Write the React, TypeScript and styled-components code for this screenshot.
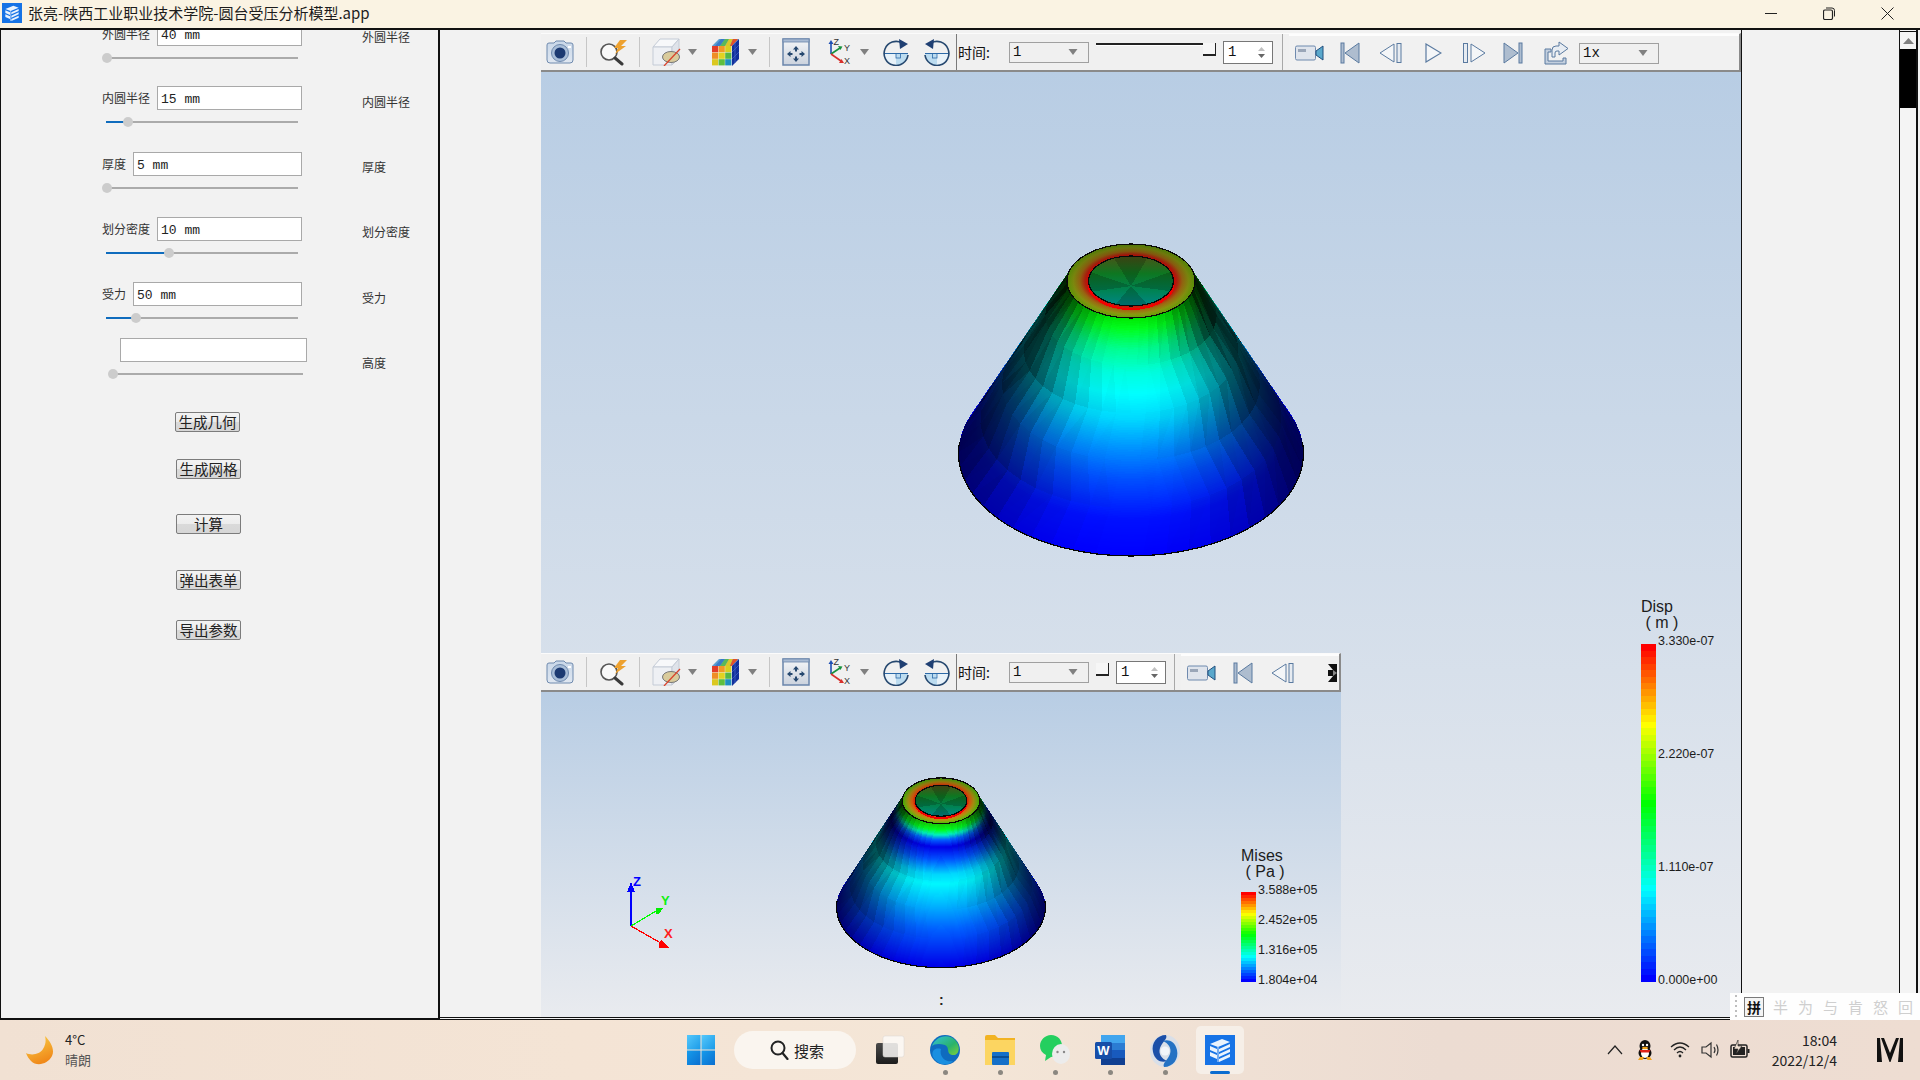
import React from 'react';
import styled, { createGlobalStyle } from 'styled-components';

const CJK = `"Noto Sans CJK SC", "Liberation Sans", sans-serif`;
const MONO = `"Liberation Mono", "Noto Sans CJK SC", monospace`;

const Global = createGlobalStyle`
  html, body { margin: 0; padding: 0; background: #f2f2f2; overflow: hidden; }
  * { box-sizing: border-box; }
`;

const Root = styled.div`
  position: relative;
  width: 1920px;
  height: 1080px;
  display: flex;
  flex-direction: column;
  font-family: ${CJK};
  color: #222;
  overflow: hidden;
`;

/* ---------- title bar ---------- */
const TitleBar = styled.header`
  height: 30px;
  flex: none;
  background: #faf3e3;
  border-bottom: 2px solid #111;
  display: flex;
  align-items: center;
  padding: 0 0 2px 2px;
`;
const TitleText = styled.span`
  margin-left: 6px;
  font-size: 15px;
  line-height: 20px;
  color: #1c1c1c;
  white-space: nowrap;
`;
const WinButtons = styled.div`
  margin-left: auto;
  display: flex;
  align-items: center;
  padding-right: 26px;
  gap: 46px;
`;

const AppLogo = ({ size }: { size: number }) => (
  <svg width={size} height={size} viewBox="0 0 30 30">
    <rect width="30" height="30" fill="#1673e6" />
    <path d="M5 9 L17 4 L25 7 L13 12 Z M5 11 L12 14 V18 L5 15 Z M14 14 L25 9 V12 L14 17 Z M5 17 L12 20 V24 L5 21 Z M14 19 L25 14 V17 L14 22 Z M14 24 L25 19 V22 L14 27 Z" fill="#eaf3fd" />
    <path d="M13 12 V27" stroke="#cfe3fa" strokeWidth="1" />
  </svg>
);

/* ---------- main area ---------- */
const Main = styled.main`
  flex: 1;
  min-height: 0;
  display: flex;
  background: #f2f2f2;
`;

const Panel = styled.section`
  width: 440px;
  flex: none;
  border-left: 1px solid #111;
  border-right: 2px solid #111;
  border-bottom: 2px solid #111;
  overflow: hidden;
  background: #f2f2f2;
`;
const Row = styled.div<{ $mt: number }>`
  display: flex;
  margin-top: ${p => p.$mt}px;
  padding-left: 101px;
`;
const Controls = styled.div<{ $shift?: number; $w?: number }>`
  width: ${p => p.$w ?? 200}px;
  flex: none;
  margin-left: ${p => p.$shift ?? 0}px;
`;
const FieldLine = styled.div`
  display: flex;
  align-items: center;
  gap: 7px;
  height: 24px;
`;
const FieldLabel = styled.label`
  font-size: 12px;
  line-height: 24px;
  color: #333;
  white-space: nowrap;
`;
const FieldInput = styled.input`
  flex: 1;
  min-width: 0;
  height: 24px;
  background: #fff;
  border: 1px solid #a9a9a9;
  outline: none;
  padding: 2px 3px 0;
  font-family: ${MONO};
  font-size: 13px;
  color: #222;
`;
const SideLabel = styled.span<{ $ml: number; $mt: number }>`
  margin-left: ${p => p.$ml}px;
  margin-top: ${p => p.$mt}px;
  font-size: 12px;
  line-height: 24px;
  color: #333;
  white-space: nowrap;
`;
const SliderWrap = styled.div<{ $ml: number; $w: number }>`
  position: relative;
  height: 24px;
  margin-left: ${p => p.$ml}px;
  width: ${p => p.$w}px;
  display: flex;
  align-items: center;
`;
const Track = styled.div`
  flex: 1;
  height: 2px;
  background: #ababab;
`;
const Fill = styled.div<{ $pct: number }>`
  position: absolute;
  left: 0;
  height: 2px;
  width: ${p => p.$pct}%;
  background: #0f6cbd;
`;
const Thumb = styled.div<{ $pct: number }>`
  position: absolute;
  left: calc(${p => p.$pct}% - 5px);
  width: 10px;
  height: 10px;
  border-radius: 50%;
  background: #cccccc;
`;
const ButtonStack = styled.div`
  display: flex;
  flex-direction: column;
  align-items: flex-start;
  padding-left: 174px;
`;
const ActionButton = styled.button<{ $mt: number; $ml?: number }>`
  width: 65px;
  height: 20px;
  margin-top: ${p => p.$mt}px;
  margin-left: ${p => p.$ml ?? 1}px;
  padding: 0;
  border: 1px solid #7c7c7c;
  border-radius: 2px;
  background: linear-gradient(180deg, #f3f3f3 0%, #ececec 50%, #dadada 50%, #d6d6d6 100%);
  font-family: ${CJK};
  font-size: 14.5px;
  line-height: 18px;
  color: #222;
`;

const Middle = styled.section`
  width: 1302px;
  flex: none;
  padding: 3px 0 0 101px;
  border-bottom: 3px double #111;
  border-right: 1px solid #111;
`;
const Scene = styled.div`
  position: relative;
  width: 1200px;
  height: 984px;
  display: flex;
  flex-direction: column;
`;
const InsetView = styled.div`
  position: absolute;
  left: 0;
  top: 620px;
  bottom: 0;
  width: 800px;
  display: flex;
  flex-direction: column;
`;
const Sky = styled.div`
  position: relative;
  flex: 1;
  min-height: 0;
  background: linear-gradient(180deg, #b8cde4 0%, #e9ebef 100%);
`;
const ConeHolder = styled.div<{ $l: number; $t: number }>`
  position: absolute;
  left: ${p => p.$l}px;
  top: ${p => p.$t}px;
  line-height: 0;
`;
const Colon = styled.span`
  position: absolute;
  left: 398px;
  top: 301px;
  font-family: "Liberation Sans", sans-serif;
  font-size: 14px;
  line-height: 14px;
  font-weight: 700;
  color: #222;
`;

const RightGap = styled.div`
  width: 158px;
  flex: none;
  border-right: 1px solid #111;
`;
const ScrollBar = styled.div`
  width: 18px;
  flex: none;
  display: flex;
  flex-direction: column;
  border-right: 2px solid #111;
  background: #f4f4f4;
`;
const ScrollUp = styled.div`
  height: 18px;
  flex: none;
  margin-top: 1px;
  border-top: 1px solid #111;
  background: #f4f4f4;
  display: flex;
  align-items: center;
  justify-content: center;
`;
const ScrollThumb = styled.div`
  height: 59px;
  flex: none;
  background: #000;
`;

/* ---------- viewer toolbar ---------- */
const Bar = styled.div`
  height: 39px;
  flex: none;
  display: flex;
  align-items: center;
  padding-left: 5px;
  background: #f0f0f0;
  border-top: 1px solid #fbfbfb;
  border-right: 2px solid #8a8a8a;
  border-bottom: 2px solid #8a8a8a;
`;
const Tool = styled.span<{ $ml: number }>`
  display: inline-flex;
  flex: none;
  margin-left: ${p => p.$ml}px;
  line-height: 0;
`;
const Sep = styled.span<{ $ml: number }>`
  flex: none;
  width: 1px;
  height: 30px;
  margin-left: ${p => p.$ml}px;
  background: #c6c6c6;
`;
const HardSep = styled.span<{ $ml: number; $dark?: boolean }>`
  flex: none;
  width: 1px;
  height: 100%;
  margin-left: ${p => p.$ml}px;
  background: ${p => (p.$dark ? '#7a7a7a' : '#a8a8a8')};
`;
const TimeLabel = styled.span`
  flex: none;
  width: 36px;
  margin-left: 1px;
  font-size: 14px;
  line-height: 20px;
  color: #111;
  white-space: nowrap;
`;
const Combo = styled.span<{ $ml: number }>`
  flex: none;
  width: 80px;
  height: 21px;
  margin-left: ${p => p.$ml}px;
  border: 1px solid #a0a0a0;
  background: #f0f0f0;
  display: flex;
  align-items: center;
  justify-content: space-between;
  padding: 0 10px 0 3px;
  font-family: ${MONO};
  font-size: 14px;
  color: #111;
`;
const TimeSlider = styled.span<{ $w: number }>`
  flex: none;
  width: ${p => p.$w}px;
  height: 13px;
  margin: -5px 0 0 7px;
  display: flex;
  align-items: flex-start;
`;
const SliderLine = styled.span`
  flex: 1;
  height: 3px;
  background: #222;
  border-bottom: 1px solid #fff;
`;
const SliderGrip = styled.span`
  flex: none;
  width: 13px;
  height: 13px;
  background: #f6f6f6;
  border-right: 1px solid #222;
  border-bottom: 2px solid #222;
`;
const Spin = styled.span`
  flex: none;
  width: 50px;
  height: 23px;
  margin-left: 7px;
  background: #fff;
  border: 1px solid #777;
  display: flex;
  align-items: center;
  justify-content: space-between;
  padding: 0 7px 0 4px;
  font-family: ${MONO};
  font-size: 14px;
  color: #111;
`;
const SpinArrows = styled.span`
  display: flex;
  flex-direction: column;
  gap: 3px;
  line-height: 0;
`;
const Raised = styled.span`
  display: flex;
  flex: 1;
  min-width: 0;
  height: 100%;
  align-items: center;
  margin-left: 6px;
  padding-left: 6px;
  background: #f1f1f1;
  border-top: 2px solid #fdfdfd;
`;

const Caret = ({ color = '#808080', w = 9 }: { color?: string; w?: number }) => (
  <svg width={w} height={6} viewBox="0 0 9 6"><path d="M0 0 H9 L4.5 6 Z" fill={color} /></svg>
);
const Camera = () => (
  <svg width="28" height="24" viewBox="0 0 28 24">
    <linearGradient id="camB" x1="0" y1="0" x2="0" y2="1"><stop offset="0" stopColor="#c9d7e8" /><stop offset="1" stopColor="#dfe7f1" /></linearGradient>
    <path d="M8 3 L10 1 H18 L20 3 H25 Q27 3 27 5 V20 Q27 23 24 23 H4 Q1 23 1 20 V5 Q1 3 3 3 Z" fill="url(#camB)" stroke="#6f8aae" />
    <circle cx="14" cy="13" r="8.5" fill="#a9bed8" stroke="#6f8aae" />
    <circle cx="14" cy="13" r="5.5" fill="#1c3a72" />
    <rect x="22" y="6" width="3" height="2" fill="#fff" />
  </svg>
);
const QuickFind = () => (
  <svg width="29" height="27" viewBox="0 0 29 27">
    <circle cx="10" cy="13" r="8" fill="#f9f9f9" stroke="#555" strokeWidth="1.6" />
    <path d="M16 19 L23 25" stroke="#3a3a3a" strokeWidth="3" strokeLinecap="round" />
    <path d="M21 1 L15 9 L19 9 L16 15 L27 7 L22 7 L28 1 Z" fill="#eda12f" />
  </svg>
);
const SectionBox = () => (
  <svg width="29" height="28" viewBox="0 0 29 28">
    <path d="M1 9 L8 1 H27 L20 9 Z" fill="#f7f8fa" stroke="#c4cbd6" />
    <path d="M1 9 H20 V27 H1 Z" fill="#eef0f4" stroke="#c4cbd6" />
    <path d="M20 9 L27 1 V20 L20 27 Z" fill="#dfe3ea" stroke="#c4cbd6" />
    <ellipse cx="19" cy="19" rx="8.5" ry="5.5" fill="#d9cb9c" stroke="#777" />
    <path d="M12 28 L28 11" stroke="#d9442c" strokeWidth="1.3" />
  </svg>
);
const RainbowCube = () => {
  const front = ['#e23c28', '#f29a26', '#d9cf1f', '#ef8e24', '#e2d320', '#56b845', '#dbc81f', '#5fbf3e', '#1f8fc0'];
  return (
    <svg width="27" height="27" viewBox="0 0 27 27">
      <path d="M0 7 L7 0 H27 L20 7 Z" fill="#5a9ed0" />
      <path d="M3 7 L9 0 H13 L8 7 Z" fill="#3a7cc8" /><path d="M8 7 L13 0 H17 L13 7 Z" fill="#59b85a" /><path d="M13 7 L17 0 H21 L18 7 Z" fill="#d8c82a" /><path d="M18 7 L21 0 H26 L20 7 Z" fill="#e2502c" />
      {front.map((c, i) => <rect key={i} x={(i % 3) * 6.6} y={7 + Math.floor(i / 3) * 6.6} width="6.2" height="6.2" fill={c} />)}
      <path d="M20 7 L27 0 V20 L20 27 Z" fill="#12309c" />
      <path d="M23 4 V24 M20 13 L27 6 M20 20 L27 13" stroke="#3f62c4" strokeWidth=".8" />
    </svg>
  );
};
const FitView = () => (
  <svg width="28" height="28" viewBox="0 0 28 28">
    <linearGradient id="fitB" x1="0" y1="0" x2="0" y2="1"><stop offset="0" stopColor="#f4f6f8" /><stop offset="1" stopColor="#cbd2dd" /></linearGradient>
    <rect x="1" y="1" width="26" height="26" fill="url(#fitB)" stroke="#6a85ab" strokeWidth="1.5" />
    <rect x="1" y="1" width="26" height="3" fill="#a9bbd4" stroke="#6a85ab" strokeWidth=".8" />
    <g fill="#26486f">
      <path d="M14 8 L11 11.5 H13 V13.5 H15 V11.5 H17 Z" />
      <path d="M14 24 L11 20.5 H13 V18.5 H15 V20.5 H17 Z" />
      <path d="M5 16 L8.5 13 V15 H10.5 V17 H8.5 V19 Z" />
      <path d="M23 16 L19.5 13 V15 H17.5 V17 H19.5 V19 Z" />
    </g>
  </svg>
);
const AxesIcon = () => (
  <svg width="24" height="28" viewBox="0 0 24 28">
    <path d="M4 16 V5" stroke="#1f4fb4" strokeWidth="1.6" /><path d="M1.5 6 L4 2 L6.5 6 Z" fill="#1f4fb4" />
    <path d="M4 16 L13 10" stroke="#16913c" strokeWidth="1.6" /><path d="M11 8 L15.5 8.5 L13.5 12 Z" fill="#16913c" />
    <path d="M4 16 L14 23" stroke="#d8302c" strokeWidth="1.6" /><path d="M12 25 L17 25 L14.5 21 Z" fill="#d8302c" />
    <text x="6.5" y="7" fontSize="9" fontFamily="Liberation Sans" fill="#333">Z</text>
    <text x="17" y="13" fontSize="9" fontFamily="Liberation Sans" fill="#333">Y</text>
    <text x="17" y="26" fontSize="9" fontFamily="Liberation Sans" fill="#333">X</text>
  </svg>
);
const RotateCW = ({ flip }: { flip?: boolean }) => (
  <svg width="26" height="27" viewBox="0 0 26 27">
    <g transform={flip ? 'translate(26 0) scale(-1 1)' : undefined}>
      <path d="M1 14.5 A12 12 0 0 0 25 14.5 Z" fill="#e8f2f9" />
      <path d="M13 14.5 H25 A12 12 0 0 1 13 26.5 Z" fill="#bcdcf0" />
      <rect x="13" y="14.5" width="4.5" height="4.5" fill="none" stroke="#2d6aa8" strokeWidth=".8" />
      <path d="M1 14.5 H25" stroke="#2d6aa8" strokeWidth="1" />
      <path d="M25 16 A12 12 0 1 1 19 4" fill="none" stroke="#26486f" strokeWidth="1.6" />
      <path d="M16 0 L25 5 L17 10 Z" fill="#1f3f72" />
    </g>
  </svg>
);
const VideoCam = () => (
  <svg width="29" height="18" viewBox="0 0 29 18">
    <rect x=".5" y="2" width="20" height="14" rx="1.5" fill="#dfe4ec" stroke="#6f8aae" />
    <rect x="3" y="5" width="8" height="3" fill="#9aa6b8" />
    <path d="M21 7 L28 2 V16 L21 11 Z" fill="#5aa8cc" stroke="#23507f" />
  </svg>
);
const StepFirst = () => (
  <svg width="20" height="22" viewBox="0 0 20 22">
    <rect x="1" y="1" width="3" height="20" fill="#aebdd0" stroke="#5a7aa0" />
    <path d="M19 1 V21 L5 11 Z" fill="#aebdcf" stroke="#5a7aa0" />
  </svg>
);
const StepPrev = () => (
  <svg width="24" height="22" viewBox="0 0 24 22">
    <path d="M15 2 V20 L1 11 Z" fill="#f4f6f8" stroke="#5a7aa0" />
    <rect x="18" y="1.5" width="4" height="19" fill="#e6ebf1" stroke="#5a7aa0" />
  </svg>
);
const Play = () => (
  <svg width="17" height="20" viewBox="0 0 17 20"><path d="M1 1 L16 10 L1 19 Z" fill="#f4f6f8" stroke="#5a7aa0" strokeWidth="1.2" /></svg>
);
const StepNext = () => (
  <svg width="24" height="22" viewBox="0 0 24 22">
    <rect x="1.5" y="1.5" width="4" height="19" fill="#e6ebf1" stroke="#5a7aa0" />
    <path d="M9 2 V20 L23 11 Z" fill="#f4f6f8" stroke="#5a7aa0" />
  </svg>
);
const StepLast = () => (
  <svg width="20" height="22" viewBox="0 0 20 22">
    <path d="M1 1 V21 L15 11 Z" fill="#aebdcf" stroke="#5a7aa0" />
    <rect x="16" y="1" width="3" height="20" fill="#aebdd0" stroke="#5a7aa0" />
  </svg>
);
const ExportIcon = () => (
  <svg width="25" height="24" viewBox="0 0 25 24">
    <path d="M1 8 H7 V11 H4 V20 H19 V17 H22 V23 H1 Z" fill="#c3cfde" stroke="#5a7aa0" />
    <path d="M8 16 V9 Q8 5 12 5 H15 V1 L24 7.5 L15 14 V10 H13 Q11 10 11 12 V16 Z" fill="#e8edf3" stroke="#5a7aa0" />
  </svg>
);
const Clipped = () => (
  <svg width="11" height="18" viewBox="0 0 11 18">
    <path d="M2 0 H11 V18 H2 L7 12 H2 V6 H7 Z" fill="#111" />
    <path d="M7 6 L11 9 L7 12 Z" fill="#888" />
  </svg>
);

const CommonTools = () => (
  <>
    <Tool $ml={0}><Camera /></Tool>
    <Sep $ml={12} />
    <Tool $ml={12}><QuickFind /></Tool>
    <Sep $ml={11} />
    <Tool $ml={12}><SectionBox /></Tool>
    <Tool $ml={7}><Caret /></Tool>
    <Tool $ml={15}><RainbowCube /></Tool>
    <Tool $ml={9}><Caret /></Tool>
    <Sep $ml={12} />
    <Tool $ml={12}><FitView /></Tool>
    <Tool $ml={17}><AxesIcon /></Tool>
    <Tool $ml={9}><Caret /></Tool>
    <Tool $ml={14}><RotateCW /></Tool>
    <Tool $ml={15}><RotateCW flip /></Tool>
    <HardSep $ml={6} $dark />
    <TimeLabel>时间:</TimeLabel>
    <Combo $ml={15}>1<Caret w={10} /></Combo>
  </>
);
const SpinBox = () => (
  <Spin>1<SpinArrows><svg width="7" height="4"><path d="M0 4 L3.5 0 L7 4 Z" fill="#c0c0c0" /></svg><svg width="7" height="4"><path d="M0 0 H7 L3.5 4 Z" fill="#666" /></svg></SpinArrows></Spin>
);

const MainToolbar = () => (
  <Bar>
    <CommonTools />
    <TimeSlider $w={120}><SliderLine /><SliderGrip /></TimeSlider>
    <SpinBox />
    <HardSep $ml={9} />
    <Raised>
      <Tool $ml={0}><VideoCam /></Tool>
      <Tool $ml={16}><StepFirst /></Tool>
      <Tool $ml={19}><StepPrev /></Tool>
      <Tool $ml={22}><Play /></Tool>
      <Tool $ml={20}><StepNext /></Tool>
      <Tool $ml={17}><StepLast /></Tool>
      <Tool $ml={21}><ExportIcon /></Tool>
      <Combo $ml={10}>1x<Caret w={10} /></Combo>
    </Raised>
  </Bar>
);
const InsetToolbar = () => (
  <Bar>
    <CommonTools />
    <TimeSlider $w={13}><SliderLine /><SliderGrip /></TimeSlider>
    <SpinBox />
    <HardSep $ml={8} />
    <Raised>
      <Tool $ml={0}><VideoCam /></Tool>
      <Tool $ml={17}><StepFirst /></Tool>
      <Tool $ml={18}><StepPrev /></Tool>
      <Tool $ml={31}><Clipped /></Tool>
    </Raised>
  </Bar>
);

/* ---------- cone drawing ---------- */
type ConeOpts = {
  id: string;
  width: number;
  height: number;
  baseRy: number;
  body: [number, string][];
  ring: [number, string][];
  dark: number;
};
const CX = 180, RING_Y = 40, BASE_Y = 212, RING_RX = 64, RING_RY = 37, BASE_RX = 172.5;
const noise = (n: number) => {
  const v = Math.sin(n * 127.1 + 11.7) * 43758.5453;
  return v - Math.floor(v);
};
const hexRgb = (h: string) => [1, 3, 5].map(i => parseInt(h.slice(i, i + 2), 16));
const sampleStops = (stops: [number, string][], y: number) => {
  let k = 0;
  while (k < stops.length - 2 && y > stops[k + 1][0]) k++;
  const f = Math.max(0, Math.min(1, (y - stops[k][0]) / (stops[k + 1][0] - stops[k][0])));
  const a = hexRgb(stops[k][1]), b = hexRgb(stops[k + 1][1]);
  return `rgb(${a.map((v, j) => Math.round(v + (b[j] - v) * f)).join(',')})`;
};

const Cone = ({ id, width, height, baseRy, body, ring, dark }: ConeOpts) => {
  const rad = (d: number) => (d * Math.PI) / 180;
  const ringPt = (a: number) => [CX + RING_RX * Math.cos(a), RING_Y + RING_RY * Math.sin(a)];
  const basePt = (a: number) => [CX + BASE_RX * Math.cos(a), BASE_Y + baseRy * Math.sin(a)];
  const at = (t: number, a: number) => {
    const r = ringPt(a), b = basePt(a);
    return [r[0] + (b[0] - r[0]) * t, r[1] + (b[1] - r[1]) * t];
  };
  const frontTop = RING_Y + RING_RY, frontBottom = BASE_Y + baseRy;
  const slices = [];
  const N = 140;
  for (let i = N; i >= 0; i--) {
    const t = i / N;
    slices.push({
      cy: RING_Y + (BASE_Y - RING_Y) * t,
      rx: RING_RX + (BASE_RX - RING_RX) * t,
      ry: RING_RY + (baseRy - RING_RY) * t,
      fill: sampleStops(body, frontTop + (frontBottom - frontTop) * t),
    });
  }
  const outline: string[] = [];
  for (let d = -17; d <= 197; d += 2) outline.push(basePt(rad(d)).map(n => n.toFixed(1)).join(','));
  for (let d = 197; d >= -17; d -= 2) outline.push(ringPt(rad(d)).map(n => n.toFixed(1)).join(','));

  const rows = 5, strips = 28;
  const tris: { pts: string; o: number }[] = [];
  const step = rad(220) / strips;
  for (let i = 0; i < rows; i++) {
    const t0 = i / rows, t1 = (i + 1) / rows;
    for (let s = -1; s <= strips; s++) {
      const a0 = rad(-20) + s * step + (i % 2 ? step / 2 : 0);
      const a1 = a0 + step;
      const a2 = rad(-20) + s * step + (i % 2 ? 0 : step / 2);
      const a3 = a2 + step;
      const mid = (a0 + a1) / 2;
      const c = Math.abs(Math.cos(mid));
      const jit = (noise(i * 53 + s) - 0.5) * 0.1 * (1 - t0 * 0.8);
      const base = Math.pow(c, 2.8) * dark * (1 - 0.3 * t0);
      const o1 = Math.max(0, Math.min(0.96, base + jit * c));
      const o2 = Math.max(0, Math.min(0.96, base - jit * 0.6 * c));
      const p = (q: number[]) => q.map(n => n.toFixed(1)).join(',');
      tris.push({ pts: `${p(at(t0, a0))} ${p(at(t0, a1))} ${p(at(t1, a3))}`, o: o1 });
      tris.push({ pts: `${p(at(t0, a0))} ${p(at(t1, a2))} ${p(at(t1, a3))}`, o: o2 });
    }
  }
  const holeRx = RING_RX * 0.664, holeRy = RING_RY * 0.676;
  const fan: { pts: string; o: number }[] = [];
  for (let k = 0; k < 8; k++) {
    const a = rad(k * 45 + 22), b = rad((k + 1) * 45 + 22);
    fan.push({
      pts: `${CX},${RING_Y + 5} ${CX + holeRx * 1.2 * Math.cos(a)},${RING_Y + holeRy * 1.2 * Math.sin(a)} ${CX + holeRx * 1.2 * Math.cos(b)},${RING_Y + holeRy * 1.2 * Math.sin(b)}`,
      o: k % 2 ? 0.2 : 0.02,
    });
  }
  const baseArcFront = `M${basePt(rad(-6)).join(' ')} A${BASE_RX} ${baseRy} 0 1 1 ${basePt(rad(186)).join(' ')}`;
  return (
    <svg width={width} height={height} viewBox="0 0 360 325" preserveAspectRatio="none" shapeRendering="crispEdges">
      <defs>
        <radialGradient id={`${id}-r`}>
          {ring.map(([o, c]) => <stop key={o} offset={o} stopColor={c} />)}
        </radialGradient>
        <linearGradient id={`${id}-shade`} x1="0" y1="0" x2="0" y2="1">
          <stop offset="0" stopColor="#000" stopOpacity=".25" /><stop offset="1" stopColor="#000" stopOpacity="0" />
        </linearGradient>
        <linearGradient id={`${id}-h`} x1="0" y1="0" x2="0" y2="1">
          <stop offset="0" stopColor="#4e5418" /><stop offset=".35" stopColor="#0f7a22" /><stop offset=".7" stopColor="#008656" /><stop offset="1" stopColor="#008a8c" />
        </linearGradient>
        <clipPath id={`${id}-c`}><polygon points={outline.join(' ')} /></clipPath>
        <clipPath id={`${id}-hc`}><ellipse cx={CX} cy={RING_Y} rx={holeRx} ry={holeRy} /></clipPath>
      </defs>
      {slices.map((s, i) => <ellipse key={i} cx={CX} cy={s.cy} rx={s.rx} ry={s.ry} fill={s.fill} />)}
      <g clipPath={`url(#${id}-c)`}>
        {tris.map((t, i) => <polygon key={i} points={t.pts} fill="#000" fillOpacity={t.o} />)}
      </g>
      <path d={baseArcFront} fill="none" stroke="#050505" strokeWidth="1.2" vectorEffect="non-scaling-stroke" />
      <ellipse cx={CX} cy={RING_Y} rx={RING_RX} ry={RING_RY} fill={`url(#${id}-r)`} stroke="#0a0a0a" strokeWidth="1.2" vectorEffect="non-scaling-stroke" />
      <ellipse cx={CX} cy={RING_Y} rx={RING_RX} ry={RING_RY} fill={`url(#${id}-shade)`} />
      <ellipse cx={CX} cy={RING_Y} rx={holeRx} ry={holeRy} fill={`url(#${id}-h)`} />
      <g clipPath={`url(#${id}-hc)`}>
        {fan.map((t, i) => <polygon key={i} points={t.pts} fill="#000" fillOpacity={t.o} />)}
      </g>
      <path d={`M${CX - holeRx} ${RING_Y + 3} A${holeRx} ${holeRy} 0 0 0 ${CX + holeRx} ${RING_Y + 3}`} fill="none" stroke="#f40000" strokeWidth="2" vectorEffect="non-scaling-stroke" />
      <ellipse cx={CX} cy={RING_Y} rx={holeRx} ry={holeRy} fill="none" stroke="#0a0a0a" strokeWidth="1.2" vectorEffect="non-scaling-stroke" />
    </svg>
  );
};

const BIG_BODY: [number, string][] = [
  [77, '#00e800'], [89, '#00ff20'], [109, '#00ff90'], [134, '#00ffe0'], [154, '#00ffff'],
  [179, '#00d8ff'], [209, '#0090ff'], [239, '#0050ff'], [279, '#0010ff'], [315, '#0000ff'],
];
const SMALL_BODY: [number, string][] = [
  [76, '#20c000'], [88, '#00ff20'], [96, '#00f0c0'], [104, '#0060ff'], [116, '#0000e8'],
  [136, '#0050ff'], [160, '#00d8ff'], [176, '#00f8ff'], [208, '#00b8ff'], [249, '#0060ff'], [310, '#0000e8'],
];
const BIG_RING: [number, string][] = [[0.66, '#f00000'], [0.72, '#c42410'], [0.8, '#a56e12'], [0.9, '#8b9a10'], [1, '#62a208']];
const SMALL_RING: [number, string][] = [[0.66, '#f02000'], [0.74, '#f06010'], [0.84, '#b89a10'], [0.93, '#78b410'], [1, '#40c000']];

/* ---------- legends ---------- */
const rainbow = (n: number) => {
  const key: [number, number[]][] = [
    [0, [255, 0, 0]], [0.235, [255, 255, 0]], [0.47, [0, 255, 0]], [0.73, [0, 255, 255]], [1, [0, 0, 255]],
  ];
  const parts: string[] = [];
  for (let i = 0; i < n; i++) {
    const t = i / (n - 1);
    let k = 0;
    while (k < key.length - 2 && t > key[k + 1][0]) k++;
    const f = (t - key[k][0]) / (key[k + 1][0] - key[k][0]);
    const c = key[k][1].map((v, j) => Math.round(v + (key[k + 1][1][j] - v) * f));
    parts.push(`rgb(${c.join(',')}) ${(i / n) * 100}% ${((i + 1) / n) * 100}%`);
  }
  return `linear-gradient(180deg, ${parts.join(', ')})`;
};
const LegendBox = styled.div<{ $l: number; $t: number }>`
  position: absolute;
  left: ${p => p.$l}px;
  top: ${p => p.$t}px;
  font-family: "Liberation Sans", sans-serif;
  color: #1c1c1c;
`;
const LegendTitle = styled.div`
  font-size: 16px;
  line-height: 16px;
  white-space: pre;
`;
const LegendBody = styled.div<{ $mt: number }>`
  display: flex;
  margin-top: ${p => p.$mt}px;
`;
const ColorBar = styled.div<{ $h: number; $bands: string }>`
  width: 15px;
  height: ${p => p.$h}px;
  background: ${p => p.$bands};
`;
const LegendTicks = styled.div<{ $span: number; $up: number }>`
  height: ${p => p.$span}px;
  margin: -${p => p.$up}px 0 0 2px;
  display: flex;
  flex-direction: column;
  justify-content: space-between;
  font-size: 12.5px;
  line-height: 14px;
  white-space: nowrap;
`;
const Legend = ({ l, t, title, unit, h, mt, up, span, bands, ticks }: { l: number; t: number; title: string; unit: string; h: number; mt: number; up: number; span: number; bands: number; ticks: string[] }) => (
  <LegendBox $l={l} $t={t}>
    <LegendTitle>{title}</LegendTitle>
    <LegendTitle>{unit}</LegendTitle>
    <LegendBody $mt={mt}>
      <ColorBar $h={h} $bands={rainbow(bands)} />
      <LegendTicks $span={span} $up={up}>{ticks.map(x => <span key={x}>{x}</span>)}</LegendTicks>
    </LegendBody>
  </LegendBox>
);
const AxisHolder = styled.div`
  position: absolute;
  left: 80px;
  top: 180px;
  line-height: 0;
`;
const AxisTriad = () => (
  <svg width="60" height="80" viewBox="0 0 60 80" shapeRendering="crispEdges" fontFamily="Liberation Sans" fontSize="13" fontWeight="700">
    <path d="M10 54 V20" stroke="#0000ff" strokeWidth="1.2" />
    <path d="M6 20 L10 10 L14 20 Z" fill="#0000ff" />
    <text x="12" y="14" fill="#0000ff">Z</text>
    <path d="M10 54 L35 39" stroke="#00ff00" strokeWidth="1.2" />
    <path d="M35 36 H42 L38 42 H35 Z" fill="#00ee00" />
    <text x="40" y="33" fill="#10f010">Y</text>
    <path d="M10 54 L38 70" stroke="#ff0000" strokeWidth="1.2" />
    <path d="M38 70 L41 68 L48 76 H38 Z" fill="#ff0000" />
    <text x="43" y="66" fill="#ff2020">X</text>
  </svg>
);

/* ---------- taskbar ---------- */
const Taskbar = styled.footer`
  height: 60px;
  flex: none;
  display: flex;
  align-items: center;
  background: linear-gradient(90deg, #f1e1d3 0%, #f4e4d5 30%, #f4e6d7 50%, #ecdcd2 75%, #eeddd2 100%);
  padding-right: 17px;
`;
const LeftGroup = styled.div`
  width: 687px;
  flex: none;
  display: flex;
  align-items: center;
  padding-left: 26px;
`;
const WeatherText = styled.div`
  margin-left: 11px;
  display: flex;
  flex-direction: column;
  font-size: 13px;
  line-height: 20px;
  color: #222;
`;
const WeatherSub = styled.span`
  color: #555;
`;
const TaskItem = styled.span<{ $ml: number; $dot?: boolean }>`
  position: relative;
  flex: none;
  width: 30px;
  height: 30px;
  margin-left: ${p => p.$ml}px;
  line-height: 0;
  &::after {
    content: '';
    display: ${p => (p.$dot ? 'block' : 'none')};
    position: absolute;
    left: 13px;
    top: 35px;
    width: 5px;
    height: 5px;
    border-radius: 50%;
    background: #8b8780;
  }
`;
const SearchPill = styled.div`
  flex: none;
  width: 122px;
  height: 38px;
  margin-left: 19px;
  border-radius: 19px;
  background: #faf5ef;
  display: flex;
  align-items: center;
  padding-left: 36px;
  gap: 5px;
  font-size: 15px;
  color: #222;
`;
const ActiveItem = styled.span`
  position: relative;
  flex: none;
  width: 48px;
  height: 48px;
  margin-left: 16px;
  background: #f6efe8;
  border-radius: 5px;
  display: flex;
  justify-content: center;
  padding-top: 9px;
  &::after {
    content: '';
    position: absolute;
    left: 14px;
    bottom: 0;
    width: 20px;
    height: 3px;
    border-radius: 2px;
    background: #0a6cd0;
  }
`;
const Tray = styled.div`
  margin-left: auto;
  display: flex;
  align-items: center;
  line-height: 0;
`;
const TrayIcon = styled.span<{ $ml: number }>`
  display: inline-flex;
  margin-left: ${p => p.$ml}px;
`;
const Clock = styled.div`
  margin-left: 21px;
  width: 66px;
  display: flex;
  flex-direction: column;
  align-items: flex-end;
  font-size: 14px;
  line-height: 20px;
  color: #222;
  white-space: nowrap;
`;
const ImeBar = styled.div`
  position: absolute;
  right: 0;
  top: 993px;
  width: 190px;
  height: 27px;
  background: #fefefe;
  display: flex;
  align-items: center;
  padding-left: 5px;
  font-size: 15px;
  line-height: 20px;
  color: #cfcfcf;
  gap: 10px;
`;
const ImeGrip = styled.span`
  width: 2px;
  height: 24px;
  margin-right: -3px;
  background: repeating-linear-gradient(180deg, #bdbdbd 0 2px, transparent 2px 5px);
`;
const ImeActive = styled.span`
  width: 20px;
  height: 20px;
  margin-right: -1px;
  border: 1px solid #7a7a7a;
  background: #f4f4f4;
  color: #111;
  font-size: 14px;
  font-weight: 700;
  line-height: 18px;
  text-align: center;
`;

const Moon = () => (
  <svg width="28" height="29" viewBox="0 0 28 29">
    <linearGradient id="moonG" x1="0" y1="0" x2=".4" y2="1"><stop offset="0" stopColor="#f9d24a" /><stop offset="1" stopColor="#f08a1a" /></linearGradient>
    <path d="M19 0 C25 6 29 14 26 20 C22 28 11 31 5 25 C3 23 1 20 0 17 C6 20 14 18 17 13 C20 8 20 4 19 0 Z" fill="url(#moonG)" />
  </svg>
);
const StartIcon = () => (
  <svg width="28" height="30" viewBox="0 0 28 30">
    <linearGradient id="wa" x1="0" y1="0" x2="1" y2="1"><stop offset="0" stopColor="#55c8fb" /><stop offset="1" stopColor="#1a9ae8" /></linearGradient>
    <linearGradient id="wb" x1="0" y1="0" x2="1" y2="1"><stop offset="0" stopColor="#159cec" /><stop offset="1" stopColor="#0b6fd0" /></linearGradient>
    <rect width="13.5" height="14.5" fill="url(#wa)" /><rect x="14.5" width="13.5" height="14.5" fill="url(#wa)" />
    <rect y="15.5" width="13.5" height="14.5" fill="url(#wb)" /><rect x="14.5" y="15.5" width="13.5" height="14.5" fill="url(#wb)" />
  </svg>
);
const SearchGlyph = () => (
  <svg width="19" height="20" viewBox="0 0 19 20"><circle cx="8" cy="8" r="6.5" fill="none" stroke="#222" strokeWidth="2" /><path d="M12.5 13 L17.5 19" stroke="#222" strokeWidth="2.2" strokeLinecap="round" /></svg>
);
const TaskView = () => (
  <svg width="30" height="30" viewBox="0 0 30 30">
    <linearGradient id="tv" x1="0" y1="0" x2="0" y2="1"><stop offset="0" stopColor="#4a4a4a" /><stop offset="1" stopColor="#1c1c1c" /></linearGradient>
    <rect x="1" y="8" width="22" height="21" rx="2" fill="url(#tv)" />
    <rect x="8" y="1" width="21" height="21" rx="2" fill="#fbf9f7" fillOpacity=".85" stroke="#d8d4d0" strokeWidth=".5" />
  </svg>
);
const EdgeIcon = () => (
  <svg width="30" height="30" viewBox="0 0 30 30">
    <linearGradient id="eg" x1="0" y1="0" x2="1" y2="1"><stop offset="0" stopColor="#34c1d8" /><stop offset=".6" stopColor="#2ab36a" /><stop offset="1" stopColor="#7ed13c" /></linearGradient>
    <circle cx="15" cy="15" r="15" fill="#0f6bbf" />
    <path d="M2 11 C5 2 18 -3 26 6 C31 12 29 21 22 20 C16 19 20 12 15 10 C9 8 4 9 2 11 Z" fill="url(#eg)" />
    <path d="M11 14 C9 21 15 28 23 26 C19 31 8 31 3 22 C1 17 4 12 11 14 Z" fill="#1a8fe0" />
  </svg>
);
const FolderIcon = () => (
  <svg width="30" height="30" viewBox="0 0 30 30">
    <path d="M0 2 Q0 0 2 0 H10 L13 3 H30 V28 H0 Z" fill="#f2b322" />
    <rect y="5" width="30" height="25" fill="#fcd561" />
    <rect x="7" y="17" width="17" height="13" rx="1" fill="#1670c8" />
    <rect x="7" y="21" width="17" height="2" fill="#0c4f94" />
  </svg>
);
const WeChatIcon = () => (
  <svg width="30" height="30" viewBox="0 0 30 30">
    <path d="M11 0 C18 0 22 5 22 11 C22 17 17 22 11 22 L5 26 L6 20 C2 18 0 15 0 11 C0 5 5 0 11 0 Z" fill="#24cf5f" />
    <ellipse cx="21" cy="19" rx="9" ry="10" fill="#ececec" />
    <circle cx="17.5" cy="17" r="1.2" fill="#888" /><circle cx="24" cy="17" r="1.2" fill="#888" />
  </svg>
);
const WordIcon = () => (
  <svg width="30" height="30" viewBox="0 0 30 30">
    <rect x="6" y="0" width="24" height="30" rx="1.5" fill="#2b7cd3" />
    <rect x="6" y="0" width="24" height="8" fill="#41a5ee" /><rect x="6" y="15" width="24" height="8" fill="#185abd" /><rect x="6" y="23" width="24" height="7" fill="#103f91" />
    <rect x="0" y="7" width="17" height="17" rx="1.5" fill="#174ea8" />
    <text x="8.5" y="20" textAnchor="middle" fontSize="13" fontWeight="700" fontFamily="Liberation Sans" fill="#fff">W</text>
  </svg>
);
const SwirlIcon = () => (
  <svg width="30" height="32" viewBox="0 0 30 32">
    <path d="M15 0 C24 0 30 7 30 16 C30 25 23 32 15 32 C8 32 0 26 0 16 C0 7 7 0 15 0 Z" fill="#d9dfe8" />
    <path d="M16 0 C7 0 1 8 3 17 C5 26 12 28 17 26 C12 24 8 19 10 13 C12 7 18 4 16 0 Z" fill="#1b4fa8" />
    <path d="M14 32 C23 32 29 24 27 15 C25 6 18 4 13 6 C18 8 22 13 20 19 C18 25 12 28 14 32 Z" fill="#2472c4" />
    <circle cx="15" cy="16" r="4.5" fill="#f2f5f9" />
  </svg>
);
const QQIcon = () => (
  <svg width="16" height="20" viewBox="0 0 16 20">
    <ellipse cx="8" cy="6" rx="5.5" ry="6" fill="#111" />
    <ellipse cx="8" cy="13" rx="6.5" ry="6" fill="#111" />
    <ellipse cx="8" cy="13" rx="4" ry="5" fill="#fff" />
    <circle cx="6" cy="5" r="1.2" fill="#fff" /><circle cx="10" cy="5" r="1.2" fill="#fff" />
    <ellipse cx="8" cy="8" rx="3" ry="1.3" fill="#f2a31b" />
    <path d="M2.5 10 H13.5 L12 12.5 H4 Z" fill="#e2231a" />
    <path d="M3 17 H7 L5.5 20 H1 Z M9 17 H13 L15 20 H10.5 Z" fill="#f2a31b" />
  </svg>
);
const WifiIcon = () => (
  <svg width="20" height="20" viewBox="0 0 20 20" fill="none" stroke="#222" strokeWidth="1.3">
    <path d="M1 7 Q10 -1 19 7" /><path d="M4 10 Q10 4 16 10" /><path d="M7 13 Q10 10 13 13" /><circle cx="10" cy="16" r="1.4" fill="#222" stroke="none" />
  </svg>
);
const SpeakerIcon = () => (
  <svg width="18" height="20" viewBox="0 0 18 20" fill="none" stroke="#333" strokeWidth="1.2">
    <path d="M1 7 H5 L10 3 V17 L5 13 H1 Z" /><path d="M13 7 Q15 10 13 13" /><path d="M15.5 4.5 Q18.5 10 15.5 15.5" />
  </svg>
);
const BatteryIcon = () => (
  <svg width="20" height="20" viewBox="0 0 20 20">
    <rect x="1" y="5" width="16" height="12" rx="1.5" fill="none" stroke="#222" strokeWidth="1.5" />
    <rect x="3" y="7" width="12" height="8" fill="#222" />
    <rect x="17.5" y="9" width="2" height="4" fill="#222" />
    <path d="M8 0 L4 9 H8 L6 14 L12 6 H8 Z" fill="#f1e1d3" stroke="#222" strokeWidth=".6" />
  </svg>
);
const MLogo = () => (
  <svg width="26" height="24" viewBox="0 0 26 24" fill="#111">
    <path d="M0 0 H3 L5 24 H0 Z" />
    <path d="M4 0 H7 L13 15 L19 0 H22 L13.5 24 H12.5 Z" />
    <path d="M21 24 L23 0 H26 V24 Z" />
  </svg>
);

/* ---------- data ---------- */
const fields = [
  { label: '外圆半径', value: '40 mm', pct: 0.6, mt: -8, side: 3 },
  { label: '内圆半径', value: '15 mm', pct: 11.5, mt: 16, side: 4 },
  { label: '厚度', value: '5 mm', pct: 0.6, mt: 18, side: 3 },
  { label: '划分密度', value: '10 mm', pct: 33, mt: 17, side: 3 },
  { label: '受力', value: '50 mm', pct: 15.6, mt: 17, side: 4 },
];
const buttons = [
  { text: '生成几何', mt: 26, ml: 0 },
  { text: '生成网格', mt: 27 },
  { text: '计算', mt: 35 },
  { text: '弹出表单', mt: 36 },
  { text: '导出参数', mt: 30 },
];

export default function App() {
  return (
    <Root>
      <Global />
      <TitleBar>
        <AppLogo size={20} />
        <TitleText>张亮-陕西工业职业技术学院-圆台受压分析模型.app</TitleText>
        <WinButtons>
          <svg width="12" height="12" viewBox="0 0 12 12"><path d="M0 6.5 H12" stroke="#222" strokeWidth="1" /></svg>
          <svg width="12" height="13" viewBox="0 0 12 13" fill="none" stroke="#222"><rect x=".5" y="3" width="9" height="9.5" rx="1.5" strokeWidth="1.2" /><path d="M3 1 H9 Q11.5 1 11.5 3.5 V9.5" strokeWidth="1" /></svg>
          <svg width="13" height="13" viewBox="0 0 13 13" stroke="#222" strokeWidth="1"><path d="M.5 .5 L12.5 12.5 M12.5 .5 L.5 12.5" /></svg>
        </WinButtons>
      </TitleBar>

      <Main>
        <Panel>
          {fields.map(f => (
            <Row key={f.label} $mt={f.mt}>
              <Controls>
                <FieldLine>
                  <FieldLabel>{f.label}</FieldLabel>
                  <FieldInput readOnly value={f.value} />
                </FieldLine>
                <SliderWrap $ml={4} $w={192}>
                  <Track />
                  <Fill $pct={f.pct} />
                  <Thumb $pct={f.pct} />
                </SliderWrap>
              </Controls>
              <SideLabel $ml={60} $mt={f.side}>{f.label}</SideLabel>
            </Row>
          ))}
          <Row $mt={8}>
            <Controls $shift={18} $w={187}>
              <FieldLine>
                <FieldInput readOnly value="" />
              </FieldLine>
              <SliderWrap $ml={-8} $w={191}>
                <Track />
                <Thumb $pct={0.6} />
              </SliderWrap>
            </Controls>
            <SideLabel $ml={55} $mt={13}>高度</SideLabel>
          </Row>
          <ButtonStack>
            {buttons.map(b => (
              <ActionButton key={b.text} $mt={b.mt} $ml={b.ml}>{b.text}</ActionButton>
            ))}
          </ButtonStack>
        </Panel>

        <Middle>
          <Scene>
            <MainToolbar />
            <Sky>
              <ConeHolder $l={410} $t={169}>
                <Cone id="big" width={360} height={325} baseRy={103} body={BIG_BODY} ring={BIG_RING} dark={0.88} />
              </ConeHolder>
              <Legend l={1100} t={527} title="Disp" unit=" ( m )" h={338} mt={13} up={10} span={353} bands={52} ticks={['3.330e-07', '2.220e-07', '1.110e-07', '0.000e+00']} />
            </Sky>
            <InsetView>
              <InsetToolbar />
              <Sky>
                <ConeHolder $l={291} $t={84}>
                  <Cone id="small" width={218} height={201} baseRy={98} body={SMALL_BODY} ring={SMALL_RING} dark={0.8} />
                </ConeHolder>
                <AxisHolder><AxisTriad /></AxisHolder>
                <Colon>:</Colon>
                <Legend l={700} t={156} title="Mises" unit=" ( Pa )" h={90} mt={12} up={9} span={104} bands={30} ticks={['3.588e+05', '2.452e+05', '1.316e+05', '1.804e+04']} />
              </Sky>
            </InsetView>
          </Scene>
        </Middle>
        <RightGap />
        <ScrollBar>
          <ScrollUp><svg width="11" height="6" viewBox="0 0 11 6"><path d="M0 6 L5.5 0 L11 6 Z" fill="#808080" /></svg></ScrollUp>
          <ScrollThumb />
        </ScrollBar>
      </Main>

      <Taskbar>
        <LeftGroup>
          <Moon />
          <WeatherText>
            <span>4°C</span>
            <WeatherSub>晴朗</WeatherSub>
          </WeatherText>
        </LeftGroup>
        <StartIcon />
        <SearchPill><SearchGlyph />搜索</SearchPill>
        <TaskItem $ml={19}><TaskView /></TaskItem>
        <TaskItem $ml={25} $dot><EdgeIcon /></TaskItem>
        <TaskItem $ml={25} $dot><FolderIcon /></TaskItem>
        <TaskItem $ml={25} $dot><WeChatIcon /></TaskItem>
        <TaskItem $ml={25} $dot><WordIcon /></TaskItem>
        <TaskItem $ml={25} $dot><SwirlIcon /></TaskItem>
        <ActiveItem><AppLogo size={30} /></ActiveItem>
        <Tray>
          <TrayIcon $ml={0}><svg width="16" height="10" viewBox="0 0 16 10" fill="none" stroke="#222" strokeWidth="1.2"><path d="M1 9 L8 1 L15 9" /></svg></TrayIcon>
          <TrayIcon $ml={14}><QQIcon /></TrayIcon>
          <TrayIcon $ml={17}><WifiIcon /></TrayIcon>
          <TrayIcon $ml={11}><SpeakerIcon /></TrayIcon>
          <TrayIcon $ml={11}><BatteryIcon /></TrayIcon>
          <Clock><span>18:04</span><span>2022/12/4</span></Clock>
          <TrayIcon $ml={40}><MLogo /></TrayIcon>
        </Tray>
      </Taskbar>

      <ImeBar>
        <ImeGrip />
        <ImeActive>拼</ImeActive>
        <span>半</span><span>为</span><span>与</span><span>肯</span><span>怒</span><span>回</span>
      </ImeBar>
    </Root>
  );
}
